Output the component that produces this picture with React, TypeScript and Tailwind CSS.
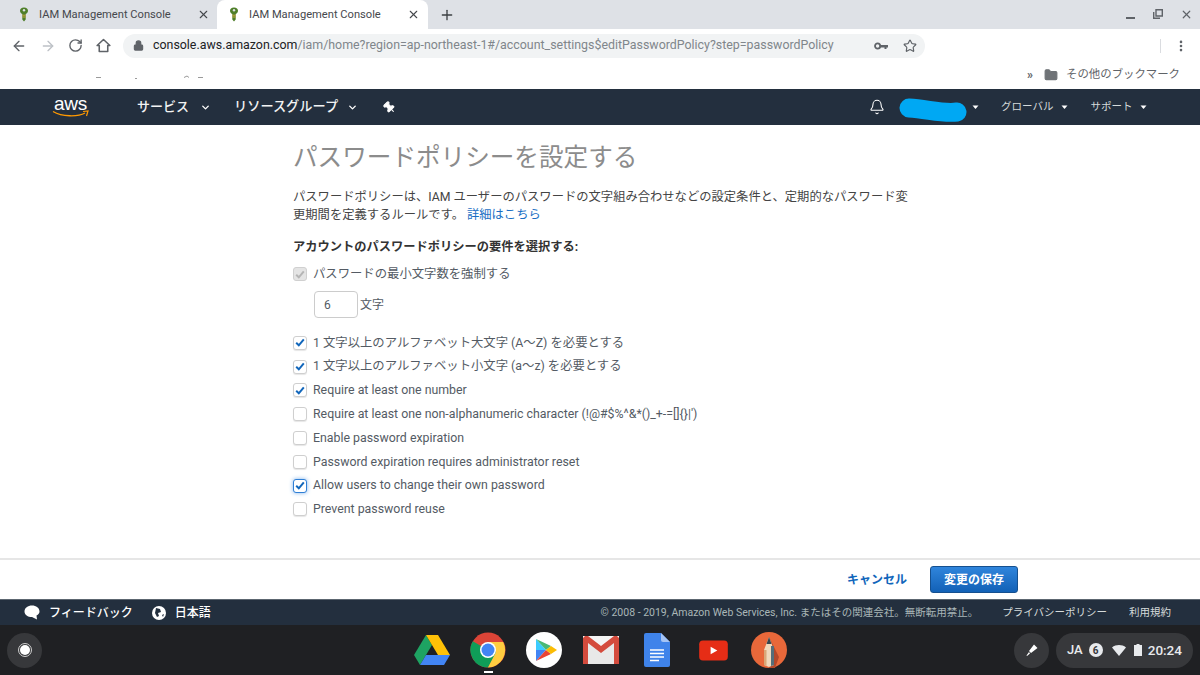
import React from "react";
import { ArrowLeft, ArrowRight, RotateCw, Lock, Star, X, Plus, Bell, MoreVertical, Folder, ChevronDown, Pin } from "lucide-react";

const Favicon = () => (
  <svg width="12" height="15" viewBox="0 0 12 15">
    <path d="M6 0.5C3.4 0.5 2 2 2 3.8 2 5.4 3 6.4 4.3 6.9V12.5L6 14.5 7.7 12.5V6.9C9 6.4 10 5.4 10 3.8 10 2 8.6.5 6 .5Z" fill="#4f7f2a" />
    <circle cx="6" cy="3.3" r="1.2" fill="#dee1e6" />
    <path d="M4.3 8.2H7.7M4.3 10H7.7" stroke="#c8a93e" strokeWidth="1" />
  </svg>
);

const Tab = ({ active }: { active?: boolean }) => (
  <div className={`flex items-center h-[29px] ${active ? "w-[211px] bg-white rounded-t-[8px] pl-[11px] pr-[8px]" : "w-[217px] pl-[18px] pr-[7px]"}`}>
    <Favicon />
    <span className={`${active ? "ml-[9px]" : "ml-[9px]"} mt-[1px] text-[11.15px] text-[#45484c] flex-1 whitespace-nowrap`}>IAM Management Console</span>
    <X size={13} strokeWidth={2} className="text-[#45484c]" />
  </div>
);

const Check = ({ checked, disabled, focus }: { checked?: boolean; disabled?: boolean; focus?: boolean }) => (
  <span
    className={`w-[14px] h-[14px] rounded-[3px] border flex items-center justify-center shrink-0 ${
      disabled ? "bg-[#e4e4e4] border-[#d0d0d0]" : focus ? "bg-white border-[#2f7fd6] shadow-[0_0_4px_#7fb2ea]" : "bg-white border-[#cfcfcf] shadow-[0_1px_1px_#e6e6e6]"
    }`}
  >
    {checked && (
      <svg width="10" height="9" viewBox="0 0 10 9">
        <path d="M1.2 4.8 3.8 7.3 8.8 1.3" fill="none" stroke={disabled ? "#b5b5b5" : "#1166bb"} strokeWidth="2" />
      </svg>
    )}
  </span>
);

const Row = ({ label, checked, focus, disabled, h = "h-[23.8px]" }: { label: string; checked?: boolean; focus?: boolean; disabled?: boolean; h?: string }) => (
  <div className={`flex items-center ${h}`}>
    <Check checked={checked} focus={focus} disabled={disabled} />
    <span className="ml-[6px] text-[12.35px] text-[#545b64] whitespace-nowrap">{label}</span>
  </div>
);

const Caret = ({ className = "" }: { className?: string }) => (
  <svg width="7" height="5" viewBox="0 0 7 5" className={className}>
    <path d="M.5 .5 3.5 4 6.5 .5Z" fill="#fff" />
  </svg>
);

const Drive = () => (
  <svg width="36" height="32" viewBox="0 0 36 32">
    <path d="M12 1 18 11 6 31 0 21Z" fill="#1ea362" />
    <path d="M12 1H24L36 21H24Z" fill="#ffc107" />
    <path d="M12 21H36L30 31H6Z" fill="#4285f4" />
  </svg>
);
const Chrome = () => (
  <svg width="36" height="36" viewBox="0 0 36 36">
    <circle cx="18" cy="18" r="17.5" fill="#db4437" />
    <path d="M18 18 2.8 9.2A17.5 17.5 0 0 0 18 35.5L27 20Z" fill="#0f9d58" />
    <path d="M18 10H33.2A17.5 17.5 0 0 1 18 35.5L26 20Z" fill="#ffcd40" />
    <circle cx="18" cy="18" r="8" fill="#fff" />
    <circle cx="18" cy="18" r="6.5" fill="#4285f4" />
  </svg>
);
const Play = () => (
  <svg width="36" height="36" viewBox="0 0 36 36">
    <circle cx="18" cy="18" r="18" fill="#fff" />
    <path d="M10 7V18H20Z" fill="#3bccff" />
    <path d="M10 7 20 18 25 14Z" fill="#48b975" />
    <path d="M10 29V18H20Z" fill="#4285f4" />
    <path d="M10 29 20 18 25 22Z" fill="#ea4335" />
    <path d="M25 14 31 18 25 22 20 18Z" fill="#fbbc04" />
  </svg>
);
const Gmail = () => (
  <svg width="36" height="28" viewBox="0 0 36 28">
    <rect width="36" height="28" rx="2" fill="#e8e8e8" />
    <path d="M0 2 18 16 36 2V0H0Z" fill="#f4f4f4" />
    <path d="M0 2V28H5V7L18 17 31 7V28H36V2L34 0H31L18 10 5 0H2Z" fill="#d44b3d" />
  </svg>
);
const Docs = () => (
  <svg width="26" height="34" viewBox="0 0 26 34">
    <path d="M2 0H17L26 9V32A2 2 0 0 1 24 34H2A2 2 0 0 1 0 32V2A2 2 0 0 1 2 0Z" fill="#3f83ea" />
    <path d="M17 0 26 9H19A2 2 0 0 1 17 7Z" fill="#a5c4f5" />
    <path d="M6 17H20M6 20.5H20M6 24H20M6 27.5H15" stroke="#fff" strokeWidth="1.4" />
  </svg>
);
const Youtube = () => (
  <svg width="29" height="21" viewBox="0 0 30 22">
    <rect width="30" height="21" y=".5" rx="4" fill="#e62d16" />
    <path d="M12 7V15L19 11Z" fill="#fff" />
  </svg>
);
const Sketch = () => (
  <svg width="36" height="36" viewBox="0 0 36 36">
    <circle cx="18" cy="18" r="18" fill="#e8683a" />
    <path d="M18 5 28 25 24 36H18Z" fill="#b2482a" />
    <path d="M18 5 13 18V33L18 35 23 33V18Z" fill="#f0d9bc" />
    <path d="M18 5 15.5 12H20.5Z" fill="#37474f" />
    <path d="M20 14H23V33L20 34Z" fill="#546e7a" />
    <path d="M13 18H15.5V34L13 33Z" fill="#d9a777" />
  </svg>
);

const Slot = ({ children }: { children: React.ReactNode }) => (
  <div className="w-[56.2px] flex justify-center relative">{children}</div>
);

const rows = [
  { label: "1 文字以上のアルファベット大文字 (A～Z) を必要とする", checked: true },
  { label: "1 文字以上のアルファベット小文字 (a～z) を必要とする", checked: true },
  { label: "Require at least one number", checked: true },
  { label: "Require at least one non-alphanumeric character (!@#$%^&*()_+-=[]{}|')" },
  { label: "Enable password expiration" },
  { label: "Password expiration requires administrator reset" },
  { label: "Allow users to change their own password", checked: true, focus: true },
  { label: "Prevent password reuse" },
];

export default function App() {
  return (
    <div className="w-[1200px] h-[675px] flex flex-col overflow-hidden bg-white font-['Roboto','Noto_Sans_CJK_JP',sans-serif]">
      {/* tab strip */}
      <div className="h-[29px] bg-[#dee1e6] flex items-center shrink-0">
        <Tab />
        <Tab active />
        <Plus size={16} strokeWidth={2} className="ml-[11px] text-[#3c4043]" />
        <div className="ml-auto flex items-center pr-[7px] text-[#5f6368]">
          <span className="w-[9px] h-[2px] bg-[#5f6368] mt-[7px]" />
          <svg width="10" height="10" viewBox="0 0 10 10" className="ml-[18px] -mt-[2px]">
            <path d="M3 .7H9.3V7H3Z" fill="none" stroke="#5f6368" strokeWidth="1.4" />
            <path d="M.7 3V9.3H7" fill="none" stroke="#5f6368" strokeWidth="1.4" />
          </svg>
          <X size={13} strokeWidth={2.2} className="ml-[17px]" />
        </div>
      </div>
      {/* toolbar */}
      <div className="h-[31px] flex items-center shrink-0 pt-[2px]">
        <ArrowLeft size={16} strokeWidth={2} className="ml-[11px] text-[#5f6368]" />
        <ArrowRight size={16} strokeWidth={2} className="ml-[13px] text-[#bdc1c6]" />
        <RotateCw size={15} strokeWidth={2.2} className="ml-[12px] text-[#5f6368]" />
        <svg width="17" height="17" viewBox="0 0 24 24" className="ml-[12px]">
          <path d="M12 3.5 3 12H6V20.5H18V12H21Z" fill="none" stroke="#5f6368" strokeWidth="2.2" strokeLinejoin="round" />
        </svg>
        <div className="ml-[11px] w-[802px] h-[24px] bg-[#f1f3f4] rounded-full flex items-center pl-[10px] pr-[8px]">
          <Lock size={11} strokeWidth={2.5} className="text-[#5f6368]" fill="#5f6368" />
          <span className="ml-[9px] text-[12.4px] whitespace-nowrap text-[#202124]">
            console.aws.amazon.com<span className="text-[#80868b]">/iam/home?region=ap-northeast-1#/account_settings$editPasswordPolicy?step=passwordPolicy</span>
          </span>
          <svg width="14" height="8" viewBox="0 0 14 8" className="ml-auto">
            <circle cx="3.6" cy="4" r="2.6" fill="none" stroke="#5f6368" strokeWidth="1.8" />
            <path d="M6 3H14V5.5H12.5V7H10.5V5.5H6Z" fill="#5f6368" />
          </svg>
          <Star size={14} strokeWidth={2} className="ml-[15px] text-[#5f6368]" />
        </div>
        <div className="ml-auto mr-[12px] flex items-center gap-[13px]">
          <span className="w-px h-[14px] bg-[#dadce0]" />
          <MoreVertical size={14} strokeWidth={2.5} className="text-[#5f6368]" />
        </div>
      </div>
      {/* bookmarks */}
      <div className="h-[29px] flex items-center shrink-0 pr-[20px]">
        <svg width="210" height="29" viewBox="0 0 210 29">
          <path d="M96 17.5H101M135 18.5H137M184 17.5 187 16 189 17.5M198 17.5H203" stroke="#9a9a9a" strokeWidth="1" fill="none" />
        </svg>
        <span className="ml-auto text-[12px] text-[#5f6368] font-bold">»</span>
        <Folder size={14} className="ml-[11px] text-[#6f7377]" fill="#6f7377" />
        <span className="ml-[8px] text-[11.4px] text-[#5f6368] whitespace-nowrap">その他のブックマーク</span>
      </div>
      {/* AWS nav */}
      <div className="h-[36px] bg-[#232f3e] flex items-center shrink-0 text-white">
        <div className="ml-[52px] w-[37px] flex flex-col items-center leading-none">
          <span className="text-[19px] leading-[13px] font-['Liberation_Sans'] tracking-[-0.3px]">aws</span>
          <svg width="37" height="8" viewBox="0 0 37 8">
            <path d="M1 1.5C10 7 26 7 33 3" fill="none" stroke="#f90" strokeWidth="1.4" />
            <path d="M31 1.5 36 1 34.5 6" fill="none" stroke="#f90" strokeWidth="1.2" />
          </svg>
        </div>
        <span className="ml-[48px] text-[13px] font-medium text-[#f2f3f3]">サービス</span>
        <ChevronDown size={11} strokeWidth={3} className="ml-[11px]" />
        <span className="ml-[23px] text-[13.2px] font-medium text-[#f2f3f3] whitespace-nowrap">リソースグループ</span>
        <ChevronDown size={11} strokeWidth={3} className="ml-[9px]" />
        <Pin size={13} fill="#fff" strokeWidth={2} className="ml-[25px] -rotate-45" />
        <Bell size={16} strokeWidth={1.6} className="ml-[473px]" />
        <svg width="68" height="24" viewBox="0 0 68 24" className="ml-[14px] mt-[6px]">
          <path d="M10 10C28 11 44 16 58 14" fill="none" stroke="#00a8f3" strokeWidth="19" strokeLinecap="round" />
        </svg>
        <Caret className="ml-[5px]" />
        <span className="ml-[22px] text-[10.5px] text-[#d5dbdb] whitespace-nowrap">グローバル</span>
        <Caret className="ml-[8px]" />
        <span className="ml-[22px] text-[10.5px] text-[#d5dbdb] whitespace-nowrap">サポート</span>
        <Caret className="ml-[8px]" />
      </div>
      {/* content */}
      <div className="flex-1 pl-[293px] min-h-0">
        <h1 className="mt-[17px] h-[32px] leading-[32px] text-[24.6px] text-[#8c8c8c] font-normal whitespace-nowrap">パスワードポリシーを設定する</h1>
        <div className="mt-[14px] text-[12.3px] leading-[18px] text-[#444] whitespace-nowrap">
          <div>パスワードポリシーは、IAM ユーザーのパスワードの文字組み合わせなどの設定条件と、定期的なパスワード変</div>
          <div className="flex gap-[3px]">
            <span>更期間を定義するルールです。</span>
            <span className="text-[#1a6fc4]">詳細はこちら</span>
          </div>
        </div>
        <p className="mt-[14px] text-[12.25px] leading-[18px] font-bold text-[#333]">アカウントのパスワードポリシーの要件を選択する:</p>
        <div className="mt-[6px]">
          <Row label="パスワードの最小文字数を強制する" checked disabled h="h-[24px]" />
        </div>
        <div className="ml-[21px] mt-[5px] h-[27px] flex items-center">
          <div className="w-[44px] h-[27px] border border-[#ccc] rounded-[4px] flex items-center pl-[9px] text-[12px] text-[#545b64]">6</div>
          <span className="ml-[2px] text-[12px] text-[#545b64]">文字</span>
        </div>
        <div className="mt-[13px] flex flex-col">
          {rows.map((r) => (
            <Row key={r.label} {...r} />
          ))}
        </div>
      </div>
      {/* action bar */}
      <div className="h-[41px] border-t-2 border-[#e6e6e6] flex items-center justify-end shrink-0 pr-[182px]">
        <span className="text-[12px] font-bold text-[#1166bb]">キャンセル</span>
        <span className="ml-[23px] w-[88px] h-[27px] rounded-[3px] border border-[#15508f] bg-gradient-to-b from-[#2f85dc] to-[#1261b6] text-white text-[12px] font-bold flex items-center justify-center">変更の保存</span>
      </div>
      {/* footer */}
      <div className="h-[26px] bg-[#232f3e] flex items-center shrink-0 text-white border-t border-[#5c6670]">
        <svg width="16" height="15" viewBox="0 0 16 15" className="ml-[24px]">
          <path d="M8 .5C3.8.5.5 3 .5 6.5S3.8 12 8 12L13 14.5 12.5 10.5C14.4 9.5 15.5 8.2 15.5 6.5 15.5 3 12.2.5 8 .5Z" fill="#fff" />
        </svg>
        <span className="ml-[9px] text-[12px] font-medium">フィードバック</span>
        <svg width="14" height="14" viewBox="0 0 14 14" className="ml-[19px]">
          <circle cx="7" cy="7" r="7" fill="#fff" />
          <path d="M4 2 8 3 9 6 6 7 7 10 5 11 3 7ZM10 9 12 8 11 11Z" fill="#232f3e" />
        </svg>
        <span className="ml-[9px] text-[12px] font-medium">日本語</span>
        <span className="ml-auto text-[10.5px] text-[#aab7b8] whitespace-nowrap">© 2008 - 2019, Amazon Web Services, Inc. またはその関連会社。無断転用禁止。</span>
        <span className="ml-[24px] text-[10.5px] text-[#d5dbdb] whitespace-nowrap">プライバシーポリシー</span>
        <span className="ml-[22px] mr-[29px] text-[10.5px] text-[#d5dbdb] whitespace-nowrap">利用規約</span>
      </div>
      {/* shelf */}
      <div className="h-[50px] bg-[#1f2023] flex items-center shrink-0">
        <div className="ml-[7px] w-[35px] h-[35px] rounded-full bg-[#37383b] flex items-center justify-center">
          <span className="w-[14px] h-[14px] rounded-full border border-[#cfcfcf] flex items-center justify-center">
            <span className="w-[10px] h-[10px] rounded-full bg-white" />
          </span>
        </div>
        <div className="ml-[362px] flex items-center">
          <Slot><Drive /></Slot>
          <Slot>
            <Chrome />
            <span className="absolute left-[24px] -bottom-[5px] w-[9px] h-[2px] bg-white" />
          </Slot>
          <Slot><Play /></Slot>
          <Slot><Gmail /></Slot>
          <Slot><Docs /></Slot>
          <Slot><Youtube /></Slot>
          <Slot><Sketch /></Slot>
        </div>
        <div className="ml-auto mr-[7px] flex items-center gap-[7px]">
          <div className="w-[35px] h-[35px] rounded-full bg-[#37383b] flex items-center justify-center">
            <svg width="14" height="14" viewBox="0 0 14 14">
              <path d="M9 1.5 12.5 5 6 10 4 8ZM4 9 5 10.5 2 13 1.5 12.5Z" fill="#fff" />
            </svg>
          </div>
          <div className="w-[137px] h-[35px] rounded-full bg-[#37383b] flex items-center pl-[11px] text-white">
            <span className="text-[13px] font-medium text-[#e8eaed]">JA</span>
            <span className="ml-[6px] w-[14px] h-[14px] rounded-full bg-[#e8eaed] text-[#37383b] text-[10px] font-bold flex items-center justify-center">6</span>
            <svg width="14" height="11" viewBox="0 0 14 11" className="ml-[9px]">
              <path d="M0 2.5C4 -.7 10 -.7 14 2.5L7 11Z" fill="#e8eaed" />
            </svg>
            <svg width="8" height="12" viewBox="0 0 8 12" className="ml-[8px]">
              <path d="M2.5 0H5.5V1H8V12H0V1H2.5Z" fill="#e8eaed" />
            </svg>
            <span className="ml-[6px] text-[13.5px] font-medium text-[#e8eaed]">20:24</span>
          </div>
        </div>
      </div>
    </div>
  );
}
